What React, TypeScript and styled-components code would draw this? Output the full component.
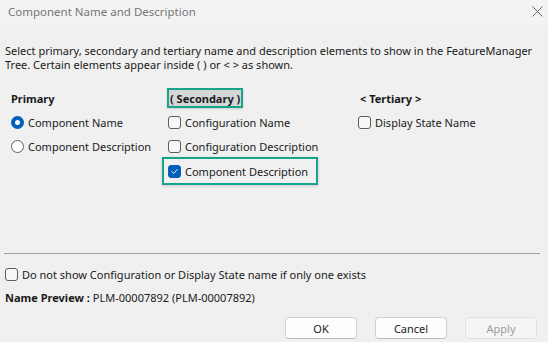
import React from 'react';
import styled, { createGlobalStyle } from 'styled-components';

/* ─── Global ─────────────────────────────────────────────────────────────── */
const Global = createGlobalStyle`
  html, body { margin: 0; padding: 0; background: #f0f0f0; }
  body { font-family: 'Noto Sans', 'Open Sans', Arial, sans-serif; }
`;

/* ─── Styled ─────────────────────────────────────────────────────────────── */
const Window = styled.div`
  width: 548px; height: 342px;
  display: flex; flex-direction: column;
  background: #f0f0f0;
  overflow: hidden;
  font-size: 11px; color: #1a1a1a;
`;

const TitleBar = styled.div`
  height: 25px;
  box-sizing: border-box;
  display: flex; align-items: center; justify-content: space-between;
  padding: 0 5px 3px 8px;
  background: #f3f3f3;
  color: #767676;
  font-size: 11.5px;
`;

const Body = styled.div`
  flex: 1;
  display: flex; flex-direction: column;
  padding: 19px 0 0;
`;

const Intro = styled.p`
  margin: 0 0 0 5px;
  line-height: 14px;
`;

const OptionsGrid = styled.div`
  display: grid;
  grid-template-columns: 158px 190px 1fr;
  margin: 14px 0 0 10px;
`;

const Column = styled.div`
  display: flex; flex-direction: column;
`;

const Heading = styled.div<{ indent?: number }>`
  height: 24px;
  display: flex; align-items: center;
  padding-left: ${({ indent }) => indent ?? 1}px;
  font-weight: 700;
`;

const Marked = styled.span<{ shade?: boolean }>`
  display: inline-flex; align-items: center;
  margin: 0 0 0 -2px;
  padding: 0 1px 0 1px;
  height: 16px;
  border: 2px solid #14a58a;
  box-shadow: 0 1px 2px rgba(0,0,0,0.15);
  background: ${({ shade }) => shade ? '#d6d6d6' : 'transparent'};
`;

const Option = styled.label<{ boxed?: boolean }>`
  height: 24px;
  display: flex; align-items: center; gap: 4px;
  ${({ boxed }) => boxed && `
    margin-left: -6px;
    margin-top: -1px;
    padding: 0 8px 0 4px;
    width: fit-content;
    border: 2px solid #14a58a;
    box-shadow: 0 1px 3px rgba(0,0,0,0.18);
  `}
`;

const Box = styled.span<{ checked?: boolean }>`
  width: 11px; height: 11px;
  border-radius: 3px;
  border: 1px solid ${({ checked }) => checked ? '#005fb8' : '#5c5c5c'};
  background: ${({ checked }) => checked ? '#005fb8' : '#f7f7f7'};
  display: flex; align-items: center; justify-content: center;
  flex-shrink: 0;
`;

const Radio = styled.span<{ checked?: boolean }>`
  width: ${({ checked }) => checked ? 5 : 11}px;
  height: ${({ checked }) => checked ? 5 : 11}px;
  border-radius: 50%;
  border: ${({ checked }) => checked ? '4px solid #005fb8' : '1px solid #5c5c5c'};
  background: #fff;
  flex-shrink: 0;
  margin-left: 1px;
`;

const Spacer = styled.div`
  flex: 1;
`;

const Separator = styled.hr`
  margin: 0 8px 0 4px;
  border: none;
  border-top: 1px solid #a0a0a0;
  height: 0;
`;

const Footer = styled.div`
  display: flex; flex-direction: column;
  padding: 8px 11px 3px 5px;
`;

const Preview = styled.div`
  height: 22px;
  display: flex; align-items: center; gap: 3px;
  b { font-weight: 700; }
`;

const Buttons = styled.div`
  display: flex; justify-content: flex-end; gap: 18px;
  margin-top: 9px;
`;

const Button = styled.button<{ disabled?: boolean }>`
  width: 72px; height: 22px;
  border-radius: 4px;
  border: 1px solid ${({ disabled }) => disabled ? '#e2e2e2' : '#d0d0d0'};
  border-bottom-color: ${({ disabled }) => disabled ? '#e2e2e2' : '#bcbcbc'};
  background: ${({ disabled }) => disabled ? '#f5f5f5' : '#fdfdfd'};
  color: ${({ disabled }) => disabled ? '#9d9d9d' : '#1a1a1a'};
  font-family: inherit; font-size: 11px;
  padding: 0;
`;

function Check({ checked }: { checked?: boolean }) {
  return (
    <Box checked={checked}>
      {checked && (
        <svg width="9" height="9" viewBox="0 0 10 10">
          <path d="M2 5.2 L4.2 7.2 L8 2.8" fill="none" stroke="#fff" strokeWidth="1" strokeLinecap="round" strokeLinejoin="round" />
        </svg>
      )}
    </Box>
  );
}

export default function App() {
  return (
    <Window>
      <Global />
      <TitleBar>
        <span>Component Name and Description</span>
        <svg width="11" height="11" viewBox="0 0 11 11">
          <path d="M0.5 0.5 L10.5 10.5 M10.5 0.5 L0.5 10.5" stroke="#6a6a6a" strokeWidth="1" />
        </svg>
      </TitleBar>

      <Body>
        <Intro>
          Select primary, secondary and tertiary name and description elements to show in the FeatureManager<br />
          Tree. Certain elements appear inside ( ) or &lt; &gt; as shown.
        </Intro>

        <OptionsGrid>
          <Column>
            <Heading>Primary</Heading>
            <Option><Radio checked />Component Name</Option>
            <Option><Radio />Component Description</Option>
          </Column>

          <Column>
            <Heading><Marked shade>( Secondary )</Marked></Heading>
            <Option><Check />Configuration Name</Option>
            <Option><Check />Configuration Description</Option>
            <Option boxed><Check checked />Component Description</Option>
          </Column>

          <Column>
            <Heading indent={2}>&lt; Tertiary &gt;</Heading>
            <Option><Check />Display State Name</Option>
          </Column>
        </OptionsGrid>

        <Spacer />
        <Separator />

        <Footer>
          <Option><Check />Do not show Configuration or Display State name if only one exists</Option>
          <Preview><b>Name Preview :</b> PLM-00007892 (PLM-00007892)</Preview>
          <Buttons>
            <Button>OK</Button>
            <Button>Cancel</Button>
            <Button disabled>Apply</Button>
          </Buttons>
        </Footer>
      </Body>
    </Window>
  );
}
